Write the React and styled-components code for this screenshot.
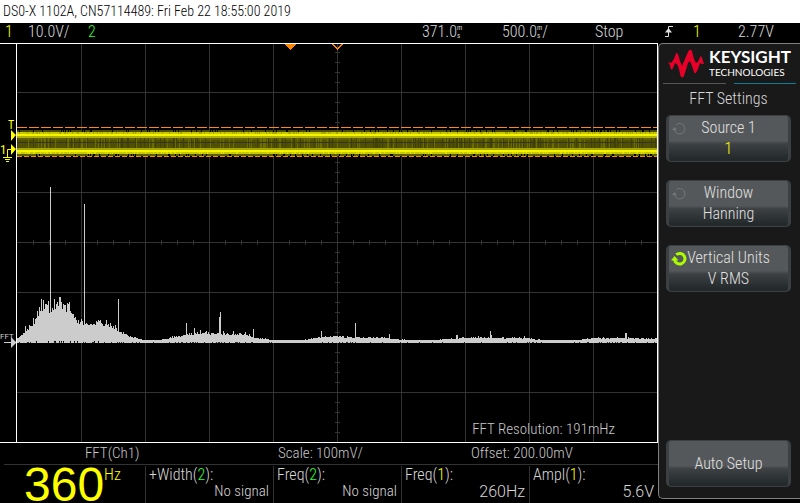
import React from "react";
import styled, { createGlobalStyle } from "styled-components";

const NARROW = '"Roboto Condensed", "Liberation Sans", sans-serif';

const GlobalStyle = createGlobalStyle`
  * { box-sizing: border-box; }
  body {
    margin: 0;
    background: #000;
    color: #d8d8d8;
    font: 300 16px/20px ${NARROW};
  }
`;

const Screen = styled.main`
  display: flex;
  flex-direction: column;
  min-height: 100vh;
`;

const TitleBar = styled.h1`
  margin: 0;
  height: 23px;
  padding-left: 3px;
  background: #fff;
  color: #000;
  font: 300 14px/23px ${NARROW};
`;

const StatusBar = styled.header`
  display: grid;
  grid-template-columns: 23px 60px 1fr 80px 93px 69px 29px 45px 62px;
  align-items: center;
  height: 20px;
  padding: 0 0 3px 5px;
  line-height: 17px;
  white-space: nowrap;
`;

const Tint = styled.span`
  color: ${(p) => p.$color};
`;

const TimeValue = styled.span`
  display: flex;
  align-items: center;
`;

const StackedUnit = styled.span`
  display: inline-flex;
  flex-direction: column;
  font: 400 7px/8px ${NARROW};
`;

const Body = styled.div`
  display: flex;
  flex: 1;
`;

const ScopeArea = styled.section`
  flex: 1;
  min-width: 0;
  display: flex;
  flex-direction: column;
`;

const PlotRow = styled.div`
  position: relative;
  display: flex;
  height: 400px;
  border-top: 1px solid #fff;
  border-bottom: 1px solid #fff;
`;

const Gutter = styled.svg`
  flex: none;
  width: 16px;
  height: 398px;
`;

const Plot = styled.svg`
  flex: 1;
  min-width: 0;
  height: 398px;
`;

const Resolution = styled.div`
  position: absolute;
  right: 43px;
  bottom: 3px;
  color: #c8c8c8;
  font-size: 15px;
`;

const InfoRow = styled.div`
  display: grid;
  grid-template-columns: 193fr 193fr 187fr;
  height: 22px;
  margin-left: 4px;
  padding-left: 81px;
  border-bottom: 1px solid #333;
  color: #c8c8c8;
  font-size: 15px;
  line-height: 20px;
`;

const Measurements = styled.div`
  display: grid;
  grid-template-columns: 145fr repeat(3, 128fr) 129fr;
  height: 35px;
  margin-top: 1px;
`;

const Counter = styled.div`
  display: flex;
  padding-left: 24px;
  color: #ffff00;
`;

const CounterDigits = styled.span`
  font: 400 48px/38px "Liberation Sans", sans-serif;
`;

const CounterUnit = styled.span`
  line-height: 17px;
`;

const Measure = styled.div`
  display: flex;
  flex-direction: column;
  padding: 0 4px 0 3px;
  border-left: 1px solid #333;
  line-height: 17px;
`;

const MeasureValue = styled.span`
  align-self: flex-end;
  font-family: ${(p) => (p.$wide ? "Roboto, sans-serif" : NARROW)};
  font-size: ${(p) => (p.$wide ? 16 : 15)}px;
`;

const SidePanel = styled.aside`
  display: flex;
  flex-direction: column;
  flex: none;
  width: 142px;
  height: 456px;
  padding: 5px 9px 11px 7px;
  background: #191919;
  border: solid #808080;
  border-width: 1px 0 1px 1px;
  border-radius: 5px 0 0 5px;
`;

const Brand = styled.div`
  display: flex;
  gap: 4px;
  height: 30px;
  padding-left: 2px;
  color: #fff;
`;

const Wordmark = styled.div`
  display: flex;
  flex-direction: column;
  font-family: Lato, sans-serif;
`;

const BrandName = styled.span`
  font-size: 17px;
  font-weight: 700;
  line-height: 16px;
`;

const BrandSub = styled.span`
  padding-top: 1px;
  font-size: 10px;
  font-weight: 400;
  line-height: 12px;
`;

const Tabs = styled.div`
  display: flex;
  gap: 8px;
  margin: 4px -5px 0 -3px;
`;

const TabLine = styled.span`
  flex: 1;
  height: 1px;
  background: ${(p) => p.$color};
`;

const MenuTitle = styled.h2`
  margin: 5px 0 6px;
  font: 300 16px/20px ${NARROW};
  text-align: center;
`;

const Softkeys = styled.nav`
  display: flex;
  flex: 1;
  flex-direction: column;
  gap: 18px;
`;

const Softkey = styled.button`
  position: relative;
  display: flex;
  flex-direction: column;
  align-items: center;
  justify-content: center;
  height: 47px;
  margin-top: ${(p) => (p.$last ? "auto" : "0")};
  padding: 0 0 1px;
  border: solid #3c4043;
  border-width: 1px 3px;
  border-radius: 5px;
  background: linear-gradient(#55585a, #55585a 55%, #3d4144 62%, #24292c 95%);
  color: #e0e0e0;
  font: 300 16px/21px ${NARROW};
`;

const KnobIcon = styled.svg`
  position: absolute;
  left: 2px;
  top: 5px;
  width: 16px;
  height: 16px;
`;

function rand(n) {
  const v = Math.sin(n * 127.1 + 11.7) * 43758.5453;
  return v - Math.floor(v);
}

const ENVELOPE = [
  [17, 337], [20, 335], [25, 328], [30, 324], [35, 315], [38, 308], [42, 302],
  [48, 299], [55, 299], [60, 297], [64, 300], [69, 301], [73, 308], [77, 315],
  [84, 318], [90, 318], [97, 316], [104, 319], [110, 320], [117, 326],
  [122, 331], [130, 335], [138, 338], [145, 340], [160, 339], [167, 338],
  [171, 336], [180, 334], [188, 332], [195, 331], [210, 331], [225, 332],
  [246, 332], [251, 335], [255, 337], [265, 338], [272, 340], [300, 340],
  [310, 338], [318, 336], [330, 335], [345, 336], [380, 336], [392, 338],
  [400, 339], [430, 340], [450, 338], [463, 337], [480, 336], [500, 337],
  [528, 337], [535, 339], [560, 340], [580, 339], [595, 337], [640, 337],
  [657, 338],
];

const SPIKES = {
  25: 326, 29: 325, 33: 318, 37: 311, 39: 307, 41: 299, 43: 300, 46: 304,
  48: 301, 50: 187, 54: 299, 57: 302, 59: 297, 60: 297, 63: 304, 69: 302,
  84: 204, 118: 299, 186: 323, 194: 328, 200: 330, 206: 331, 219: 317,
  220: 312, 223: 331, 233: 331, 253: 329, 321: 331, 355: 323, 389: 334,
  456: 335, 457: 335, 490: 331, 491: 335, 524: 336, 625: 333, 626: 333,
};

function envelopeAt(x) {
  const i = ENVELOPE.findIndex((p) => p[0] >= x);
  if (i <= 0) return ENVELOPE[0][1];
  const [x0, y0] = ENVELOPE[i - 1];
  const [x1, y1] = ENVELOPE[i];
  return y0 + ((y1 - y0) * (x - x0)) / (x1 - x0);
}

function spectrumPath() {
  let d = "";
  for (let x = 17; x < 657; x++) {
    const env = envelopeAt(x);
    const depth = 342 - env;
    const noisy = Math.round(env + depth * 0.32 * Math.sqrt(rand(x)));
    const top = SPIKES[x] ?? Math.min(noisy, 340);
    const notch = rand(x + 900) < Math.min(0.3, depth / 30);
    const bottom = notch ? (depth > 25 ? 341 : 342) : 343;
    d += `M${x} ${top}h1V${bottom}h-1z`;
  }
  return d;
}

function stripes(y, h, density, seed) {
  let d = "";
  for (let x = 17; x < 657; x++) {
    if (rand(x * 1.37 + seed) < density) d += `M${x} ${y}h1v${h}h-1z`;
  }
  return d;
}

function gridPath() {
  let d = "";
  for (let x = 81; x < 657; x += 64) d += `M${x} 44h1v398h-1z`;
  for (let y = 92; y < 442; y += 50) d += `M17 ${y}h640v1h-640z`;
  for (let y = 52; y < 442; y += 10) d += `M335 ${y}h5v1h-5z`;
  for (let x = 33; x < 657; x += 16) d += `M${x} 240h1v5h-1z`;
  return d;
}

const BANDS = [
  [130, 2, "#4c4c00"], [132, 2, "#c8c800"], [134, 2, "#f4f400"],
  [136, 2, "#b0b000"], [138, 2, "#606000"], [140, 8, "#505000"],
  [148, 2, "#a4a400"], [150, 2, "#f4f400"], [152, 2, "#c8c800"],
  [154, 2, "#5c5c00"],
];

function Waveforms() {
  return (
    <Plot viewBox="16 44 642 398" preserveAspectRatio="none" shapeRendering="crispEdges" role="img" aria-label="Channel 1 and FFT traces">
      <path d={gridPath()} fill="#333" />
      {BANDS.map(([y, h, c]) => (
        <rect key={y} x="17" y={y} width="640" height={h} fill={c} />
      ))}
      <path d={stripes(130, 2, 0.12, 3)} fill="#000" />
      <path d={stripes(154, 2, 0.14, 41)} fill="#000" />
      <path d={stripes(138, 10, 0.22, 77)} fill="#6c6c00" />
      <path d={stripes(138, 10, 0.15, 120)} fill="#424200" />
      <path d={stripes(132, 2, 0.25, 210)} fill="#a8a800" />
      <path d={stripes(152, 2, 0.2, 310)} fill="#e0e000" />
      <path d="M17 142.5H657" stroke="#333" strokeDasharray="11 1 5 1 20 2" />
      <path d="M17 127.5H657" stroke="#ff8c00" strokeDasharray="10 2" />
      <path d="M17 156.5H657" stroke="#ff8c00" strokeDasharray="5 2" />
      <path d={spectrumPath()} fill="#ccc" />
      <path d="M285 44h11l-5 6h-1z" fill="#ff8400" />
      <path d="M332.5 44l5 5 5-5" fill="none" stroke="#ff8400" strokeWidth="1.5" />
      <path d="M16 44h1v398h-1zM657 44h1v398h-1z" fill="#fff" />
    </Plot>
  );
}

function Markers() {
  return (
    <Gutter viewBox="0 44 16 398" aria-label="Channel markers">
      <g fill="#ffff00" fontFamily="Roboto Condensed, sans-serif">
        <text x="8" y="129" fontSize="12" fontWeight="400">T</text>
        <text x="0" y="154" fontSize="13" fontWeight="400">1</text>
        <path d="M11 130l5 5-5 6zM11 144l5 5-5 6z" />
        <path d="M11 149.5H7.5V157M3 157.5h9M5 159.5h5M6 161.5h3" fill="none" stroke="#ffff00" />
      </g>
      <g fill="#ccc">
        <text x="0" y="339" fontSize="8" fontWeight="400" fontFamily="Roboto, sans-serif">FFT</text>
        <path d="M4 342h8v1H4zM11 337l5 5v1l-5 5z" />
      </g>
    </Gutter>
  );
}

function Knob({ active }) {
  const color = active ? "#adff00" : "#74777a";
  return (
    <KnobIcon viewBox="0 0 16 16" aria-hidden="true">
      <path
        d="M5.300 3.600A5.300 5.300 0 1 1 3.500 9"
        fill="none"
        stroke={color}
        strokeWidth={active ? 3 : 1}
      />
      <path d={active ? "M0 9.500L3.500 5 7.500 9.500z" : "M1 9l2.500-3L6 9z"} fill={color} />
    </KnobIcon>
  );
}

function EdgeIcon() {
  return (
    <svg width="10" height="13" viewBox="0 0 10 13" aria-label="Rising edge">
      <path d="M1 11.5h3.5v-10H9" fill="none" stroke="#ddd" />
      <path d="M1 7.5L4.5 3 8 7.5z" fill="#ddd" />
    </svg>
  );
}

const KEYS = [
  { label: "Source 1", value: "1", color: "#ffff00" },
  { label: "Window", value: "Hanning" },
  { label: "Vertical Units", value: "V RMS", active: true },
];

const MEASURES = [
  { name: "+Width", ch: 2, value: "No signal" },
  { name: "Freq", ch: 2, value: "No signal" },
  { name: "Freq", ch: 1, value: "260Hz", wide: true },
  { name: "Ampl", ch: 1, value: "5.6V", wide: true },
];

export default function App() {
  return (
    <Screen>
      <GlobalStyle />
      <TitleBar>DS0-X 1102A, CN57114489: Fri Feb 22 18:55:00 2019</TitleBar>
      <StatusBar>
        <Tint $color="#ffff00">1</Tint>
        <span>10.0V/</span>
        <Tint $color="#30ff30">2</Tint>
        <TimeValue>371.0<StackedUnit><span>m</span><span>s</span></StackedUnit></TimeValue>
        <TimeValue>500.0<StackedUnit><span>m</span><span>s</span></StackedUnit>/</TimeValue>
        <span>Stop</span>
        <EdgeIcon />
        <Tint $color="#ffff00">1</Tint>
        <span>2.77V</span>
      </StatusBar>
      <Body>
        <ScopeArea>
          <PlotRow>
            <Markers />
            <Waveforms />
            <Resolution>FFT Resolution: 191mHz</Resolution>
          </PlotRow>
          <InfoRow>
            <span>FFT(Ch1)</span>
            <span>Scale: 100mV/</span>
            <span>Offset: 200.00mV</span>
          </InfoRow>
          <Measurements>
            <Counter>
              <CounterDigits>360</CounterDigits>
              <CounterUnit>Hz</CounterUnit>
            </Counter>
            {MEASURES.map((m) => (
              <Measure key={m.name + m.ch}>
                <span>{m.name}(<Tint $color={m.ch === 1 ? "#ffff00" : "#30ff30"}>{m.ch}</Tint>):</span>
                <MeasureValue $wide={m.wide}>{m.value}</MeasureValue>
              </Measure>
            ))}
          </Measurements>
        </ScopeArea>
        <SidePanel>
          <Brand>
            <svg width="37" height="30" viewBox="0 0 37 30" aria-hidden="true">
              <path
                d="M0 13L3 14 6 10 8 4.500Q8.500 3.500 10 5L12 12 14 17 17 10 20 3Q22-1 24 2L26 10 28 14 30 13 32 8Q33 6 34 9L35 12 36 15 34 15 32 14 30 20 28 24Q27 25 26 23L24 17 22 12 20 14 17 24 15.500 28Q13.500 29 12.500 27L11 20 9 15 7 14 5 19Q4 22 2.500 19L1.500 15z"
                fill="#e90029"
              />
            </svg>
            <Wordmark>
              <BrandName>KEYSIGHT</BrandName>
              <BrandSub>TECHNOLOGIES</BrandSub>
            </Wordmark>
          </Brand>
          <Tabs>
            <TabLine $color="#555" />
            <TabLine $color="#107c98" />
          </Tabs>
          <MenuTitle>FFT Settings</MenuTitle>
          <Softkeys>
            {KEYS.map((k) => (
              <Softkey key={k.label} type="button">
                <Knob active={k.active} />
                <span>{k.label}</span>
                <Tint $color={k.color || "inherit"}>{k.value}</Tint>
              </Softkey>
            ))}
            <Softkey type="button" $last>Auto Setup</Softkey>
          </Softkeys>
        </SidePanel>
      </Body>
    </Screen>
  );
}
